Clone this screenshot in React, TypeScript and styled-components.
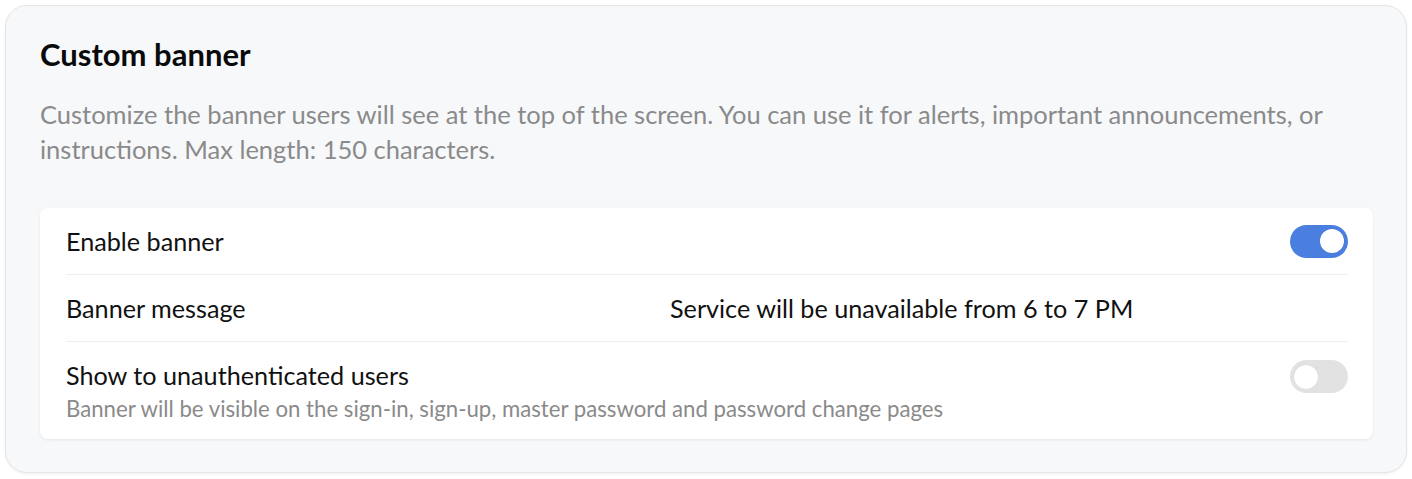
import React from "react";
import styled, { createGlobalStyle } from "styled-components";

const Global = createGlobalStyle`
  html, body { margin: 0; padding: 0; background: #ffffff; }
  body { font-family: Lato, "Noto Sans", sans-serif; color: #111; }
  * { box-sizing: border-box; }
`;

const Page = styled.div`
  padding: 5px;
`;

const Section = styled.section`
  background: #f7f8fa;
  border: 1px solid #e4e5e7;
  border-radius: 22px;
  box-shadow: 0 1px 3px rgba(0, 0, 0, 0.06);
  padding: 30px 33px 32px 34px;
  height: 468px;
`;

const Title = styled.h2`
  margin: 0;
  font-size: 31px;
  font-weight: 700;
  line-height: 37px;
  color: #0a0a0a;
`;

const Description = styled.p`
  margin: 24px 0 0;
  font-size: 25.5px;
  line-height: 35px;
  color: #8a8a8a;
  max-width: 1320px;
`;

const Card = styled.div`
  margin-top: 41px;
  background: #ffffff;
  border-radius: 8px;
  box-shadow: 0 1px 3px rgba(0, 0, 0, 0.08);
  padding: 0 25px 0 26px;
`;

const Row = styled.div<{ $last?: boolean }>`
  display: grid;
  grid-template-columns: 604px 1fr auto;
  align-items: ${(p) => (p.$last ? "start" : "center")};
  height: ${(p) => (p.$last ? "97px" : "67px")};
  border-bottom: ${(p) => (p.$last ? "none" : "1px solid #eeeeef")};
  padding: ${(p) => (p.$last ? "18px 0 17px" : "0")};
`;

const LabelBlock = styled.div`
  display: flex;
  flex-direction: column;
  gap: 6px;
  grid-column: 1 / 3;
`;

const Label = styled.div`
  font-size: 25.2px;
  line-height: 30px;
  color: #111;
`;

const Hint = styled.div`
  font-size: 22.2px;
  line-height: 26px;
  color: #8a8a8a;
`;

const Value = styled.div`
  font-size: 25.2px;
  line-height: 30px;
  color: #111;
`;

const Toggle = styled.div<{ $on: boolean }>`
  grid-column: 3;
  width: 58px;
  height: 33px;
  border-radius: 17px;
  background: ${(p) => (p.$on ? "#4a7fe0" : "#e2e2e2")};
  display: flex;
  align-items: center;
  justify-content: ${(p) => (p.$on ? "flex-end" : "flex-start")};
  padding: 0 4px;
`;

const Knob = styled.div`
  width: 24px;
  height: 24px;
  border-radius: 50%;
  background: #ffffff;
  box-shadow: 0 0 1px rgba(0, 0, 0, 0.15);
`;

export default function App() {
  return (
    <>
      <Global />
      <Page>
        <Section>
          <Title>Custom banner</Title>
          <Description>
            Customize the banner users will see at the top of the screen. You can use it for alerts, important
            announcements, or instructions. Max length: 150 characters.
          </Description>
          <Card>
            <Row>
              <Label>Enable banner</Label>
              <div />
              <Toggle $on>
                <Knob />
              </Toggle>
            </Row>
            <Row>
              <Label>Banner message</Label>
              <Value>Service will be unavailable from 6 to 7 PM</Value>
              <div />
            </Row>
            <Row $last>
              <LabelBlock>
                <Label>Show to unauthenticated users</Label>
                <Hint>Banner will be visible on the sign-in, sign-up, master password and password change pages</Hint>
              </LabelBlock>
              <Toggle $on={false}>
                <Knob />
              </Toggle>
            </Row>
          </Card>
        </Section>
      </Page>
    </>
  );
}
